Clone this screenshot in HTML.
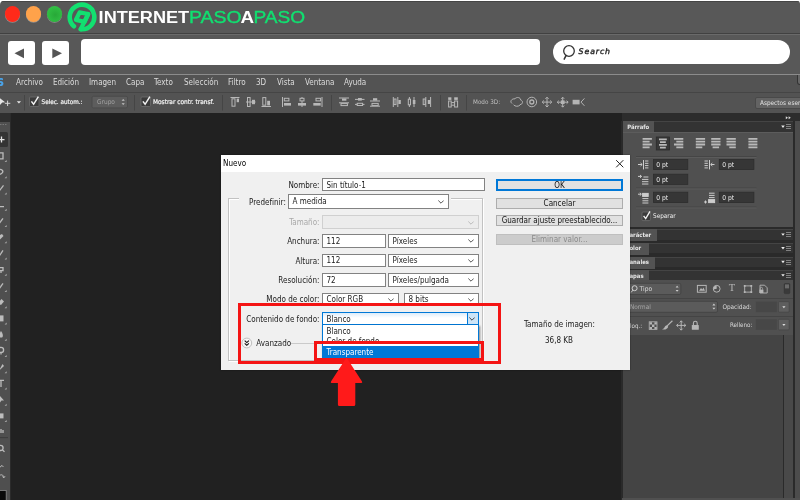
<!DOCTYPE html>
<html lang="es">
<head>
<meta charset="utf-8">
<title>Nuevo - Contenido de fondo: Transparente</title>
<style>
*{box-sizing:border-box;margin:0;padding:0}
html,body{width:800px;height:500px;overflow:hidden;background:#fff}
body{font-family:"DejaVu Sans Condensed","Liberation Sans",sans-serif;font-size:8px;color:#ddd;position:relative}
.a{position:absolute}
#win{left:0;top:1px;width:800px;height:499px;background:#585858;border-radius:4px 3px 0 0;overflow:hidden}
#o{left:0;top:-1px;width:800px;height:500px;will-change:transform}
.t{position:absolute;white-space:pre;line-height:10px;height:10px}
.dot{position:absolute;width:15.4px;height:15.4px;border-radius:50%;box-shadow:0 .7px .5px rgba(255,255,255,.35)}
.navbtn{position:absolute;top:41px;height:24px;background:#fff;border-radius:3px}
#ps{left:0;top:75px;width:800px;height:425px;background:#212121}
.menu .t{color:#dcdcdc;font-size:8px;top:3px}
#dlg{left:221px;top:155px;width:409px;height:215px;background:#f0f0f0;color:#111;box-shadow:0 0 1.5px rgba(0,0,0,.5)}
#dlg .t{color:#1a1a1a;font-size:8px}
#dlg .lbl{text-align:right}
.fld{position:absolute;background:#fff;border:1px solid #828282;height:13px}
.fld .t{left:3.5px;top:1.8px}
.btn{position:absolute;left:275px;width:127px;height:11px;background:#e1e1e1;border:1px solid #adadad;text-align:center;font-size:8px;line-height:9px;color:#111;white-space:pre}
.chev{position:absolute;right:3px;top:4px;width:6px;height:4px}
.ptab{position:absolute;left:623px;width:170px;height:11px;background:#333;border-top:1px solid #444}
.ptab .tab{position:absolute;left:0;top:-1px;height:12px;padding-top:.9px;background:#535353;color:#e6e6e6;font-weight:bold;font-size:5.9px;line-height:11px;white-space:pre;overflow:hidden}
.dk{position:absolute;background:#3a3a3a;border:1px solid #303030;height:11px}
.dk .t{color:#e8e8e8;left:3px;top:0;font-size:8px}
</style>
</head>
<body>
<div id="win" class="a"><div id="o" class="a">
  <!-- title bar -->
  <div class="a" style="left:0;top:1px;width:800px;height:1px;background:#454545"></div>
  <div class="dot" style="left:4.8px;top:6.2px;background:#ff2a1a"></div>
  <div class="dot" style="left:25.8px;top:6.3px;background:#ffa24a"></div>
  <div class="dot" style="left:46.8px;top:6.3px;background:radial-gradient(circle at 55% 55%,#28a838 0,#2fbd42 60%,#3cc94e 100%)"></div>
  <svg class="a" style="left:64px;top:1px" width="250" height="33" viewBox="64 1 250 33">
    <g fill="none" stroke="#12e070" stroke-linecap="round" stroke-linejoin="round">
      <path d="M73.93 26.28 A12.3 12.3 0 1 1 80.71 29.23" stroke-width="4.6"/>
      <path d="M88.2 14 L80.71 29.23" stroke-width="4.2"/>
      <path d="M79.6 12.4 L88.2 14 L84.6 21.8 L76 19.8 Z" stroke-width="4.3"/>
    </g>
    <text x="98.6" y="23.4" font-family="Liberation Sans, sans-serif" font-weight="bold" font-size="16" fill="#fff" textLength="90.6" lengthAdjust="spacingAndGlyphs">INTERNET</text>
    <text x="189" y="23.4" font-family="Liberation Sans, sans-serif" font-size="16" fill="#10e070" stroke="#10e070" stroke-width=".35" textLength="52.6" lengthAdjust="spacingAndGlyphs">PASO</text>
    <text x="240.6" y="23.4" font-family="Liberation Sans, sans-serif" font-weight="bold" font-size="16" fill="#fff" textLength="13.6" lengthAdjust="spacingAndGlyphs">A</text>
    <text x="253.4" y="23.4" font-family="Liberation Sans, sans-serif" font-size="16" fill="#10e070" stroke="#10e070" stroke-width=".35" textLength="51.6" lengthAdjust="spacingAndGlyphs">PASO</text>
  </svg>
  <!-- nav bar -->
  <div class="a" style="left:0;top:33px;width:800px;height:1px;background:#414141"></div>
  <div class="a" style="left:0;top:34px;width:800px;height:1px;background:#6a6a6a"></div>
  <div class="navbtn" style="left:7.6px;width:27px"></div>
  <div class="navbtn" style="left:42px;width:27px"></div>
  <svg class="a" style="left:8px;top:41px" width="62" height="24" viewBox="8 41 62 24">
    <path d="M14.5 53.3 L24 48.5 L24 58.2 Z" fill="#555"/>
    <path d="M62 53.3 L52.3 48.5 L52.3 58.2 Z" fill="#555"/>
  </svg>
  <div class="a" style="left:81px;top:39px;width:459px;height:26px;background:#fff;border-radius:4px"></div>
  <div class="a" style="left:553px;top:40px;width:237px;height:24px;background:#fff;border-radius:12px"></div>
  <svg class="a" style="left:560px;top:43px" width="20" height="20" viewBox="560 43 20 20">
    <circle cx="569" cy="51" r="5.3" fill="none" stroke="#333" stroke-width="1.3"/>
    <path d="M566 55.6 L564.2 59.2" stroke="#333" stroke-width="1.5" stroke-linecap="round"/>
  </svg>
  <div class="t" style="left:578.6px;top:47.2px;font:italic 7.8px/10px 'DejaVu Sans','Liberation Sans',sans-serif;color:#222;letter-spacing:.9px;-webkit-text-stroke:.35px #222">Search</div>
  <div class="a" style="left:0;top:74px;width:800px;height:1px;background:#8c8c8c"></div>

  <!-- photoshop -->
  <div id="ps" class="a">
    <div class="a menu" style="left:0;top:0;width:800px;height:17px;background:#535353">
      <div class="t" style="left:-3.6px;color:#4aa3e8;font-weight:bold;font-size:14px;top:1.2px">s</div>
      <div class="t" style="left:16px">Archivo</div>
      <div class="t" style="left:53px">Edición</div>
      <div class="t" style="left:89px">Imagen</div>
      <div class="t" style="left:126px">Capa</div>
      <div class="t" style="left:154px">Texto</div>
      <div class="t" style="left:184px">Selección</div>
      <div class="t" style="left:228px">Filtro</div>
      <div class="t" style="left:256px">3D</div>
      <div class="t" style="left:277px">Vista</div>
      <div class="t" style="left:305px">Ventana</div>
      <div class="t" style="left:344px">Ayuda</div>
    </div>
    <div class="a" style="left:0;top:16.5px;width:800px;height:1px;background:#454545"></div>
    <div class="a" style="left:797.2px;top:0;width:4px;height:10px;border:1.6px solid #333;border-top:none;border-radius:0 0 0 3px;background:#666"></div>
    <div id="opt" class="a" style="left:0;top:18px;width:800px;height:20px;background:#535353">
      <svg class="a" style="left:0;top:0" width="800" height="20" viewBox="0 93 800 20" fill="none" stroke="none">
        <!-- move tool -->
        <path d="M0 98.2 L5.2 102.2 L2.2 102.6 L0 105 Z" fill="#e6e6e6"/>
        <path d="M7.6 100.6 V106 M4.9 103.3 H10.3" stroke="#d8d8d8" stroke-width="1"/>
        <path d="M16.8 101.2 H21 L18.9 103.6 Z" fill="#e8e8e8"/>
        <path d="M24.5 95 V110.5 M134.5 95 V110.5 M222.5 95 V110.5 M331.5 95 V110.5 M440.5 95 V110.5 M466.5 95 V110.5" stroke="#454545" stroke-width="1"/>
        <!-- checkboxes -->
        <rect x="29.5" y="97" width="9.5" height="9.5" rx="1" fill="#3b3b3b" stroke="#6d6d6d" stroke-width=".8"/>
        <path d="M31.4 101.4 L33.6 104.3 L38.4 96.6" stroke="#f2f2f2" stroke-width="1.5"/>
        <rect x="141" y="97" width="9.5" height="9.5" rx="1" fill="#3b3b3b" stroke="#6d6d6d" stroke-width=".8"/>
        <path d="M142.9 101.4 L145.1 104.3 L149.9 96.6" stroke="#f2f2f2" stroke-width="1.5"/>
        <!-- grupo dropdown -->
        <rect x="92" y="96.3" width="35.5" height="11.6" rx="1.5" fill="#5d5d5d" stroke="#474747" stroke-width=".8"/>
        <path d="M121.6 100.8 L123.2 98.9 L124.8 100.8 Z M121.6 103.2 L123.2 105.1 L124.8 103.2 Z" fill="#c4c4c4"/>
        <!-- align icons -->
        <g stroke="#b8b8b8" stroke-width="1">
          <path d="M230.5 97.5 H239.5"/><rect x="232" y="98.8" width="3" height="7.4"/><rect x="236.7" y="98.6" width="2.3" height="3.6" fill="#b8b8b8" stroke="none"/>
          <path d="M246 102 H255.5"/><rect x="247.5" y="97.5" width="2.6" height="9"/><rect x="252" y="99.8" width="3" height="4.4" fill="#b8b8b8" stroke="none"/>
          <path d="M261.5 106.5 H271"/><rect x="262.8" y="97.6" width="3" height="7.6"/><rect x="267.2" y="100.8" width="2.8" height="4.6" fill="#b8b8b8" stroke="none"/>
          <path d="M282.5 97 V107"/><rect x="284.3" y="98.3" width="4.6" height="2.6"/><rect x="284" y="103" width="7" height="2.6" fill="#b8b8b8" stroke="none"/>
          <path d="M302 97 V107"/><rect x="300" y="98.3" width="4" height="2.6" fill="#535353"/><rect x="298" y="103" width="8" height="2.6" fill="#b8b8b8" stroke="none"/>
          <path d="M322 97 V107"/><rect x="316" y="98.3" width="4.6" height="2.6"/><rect x="313.3" y="103" width="7.4" height="2.6" fill="#b8b8b8" stroke="none"/>
          <!-- distribute -->
          <path d="M339 98 H349 M339 102.8 H349"/><rect x="342" y="98.5" width="4.4" height="2.2" fill="#b8b8b8" stroke="none"/><rect x="341" y="103.6" width="6.4" height="2"/>
          <path d="M355 99.4 H364.5 M355 104.4 H364.5"/><rect x="358" y="98" width="3.8" height="2.6" fill="#b8b8b8" stroke="none"/><rect x="357.2" y="103.3" width="5.4" height="2.2" fill="#535353"/>
          <path d="M370 101 H380 M370 106.2 H380"/><rect x="373" y="98.2" width="4.2" height="2.4" fill="#b8b8b8" stroke="none"/><rect x="372" y="103.4" width="6.2" height="2"/>
          <path d="M393.3 97 V107 M397.8 97 V107"/><rect x="394" y="99" width="2" height="5.6"/><rect x="398.4" y="100" width="2.4" height="4" fill="#b8b8b8" stroke="none"/>
          <path d="M409.4 97 V107 M414 97 V107"/><rect x="408.3" y="99.2" width="2.2" height="5.6" fill="#535353"/><rect x="412.8" y="100" width="2.6" height="4" fill="#b8b8b8" stroke="none"/>
          <path d="M425.8 97 V107 M430.6 97 V107"/><rect x="423.2" y="99" width="2" height="5.6"/><rect x="427.8" y="100" width="2.4" height="4" fill="#b8b8b8" stroke="none"/>
          <!-- auto align -->
          <rect x="448.2" y="97.3" width="3.2" height="2.6" fill="#b8b8b8" stroke="none"/><rect x="454.2" y="97.3" width="3.6" height="2.6" fill="#b8b8b8" stroke="none"/>
          <rect x="448.6" y="101" width="2.6" height="6"/><rect x="454.6" y="101" width="3" height="6"/><path d="M451.4 102.6 H454.4 M451.4 105.2 H454.4"/>
        </g>
        <!-- 3D icons -->
        <g stroke="#b4b4b4" stroke-width="1">
          <path d="M512 103.5 C509.6 101.6 511.4 98.6 515 98.8 C516.6 96.6 520.8 97.4 520.6 100 C523.4 100.6 523 104.4 520 104.6 M513.6 104.8 C515 106.6 518.4 106.8 520 105" />
          <circle cx="531.8" cy="102" r="4.8"/><circle cx="531.8" cy="102" r="2" stroke-width="1.3"/>
          <path d="M547 97.4 V106.8 M542.4 102.1 H551.6 M545.4 98.8 L547 97.2 L548.6 98.8 M545.4 105.4 L547 107 L548.6 105.4 M543.8 100.5 L542.2 102.1 L543.8 103.7 M550.2 100.5 L551.8 102.1 L550.2 103.7"/>
          <path d="M557.4 102.2 H568 M562.7 97.4 V107"/><rect x="560.8" y="100.4" width="3.8" height="3.6" fill="#b4b4b4" stroke="none"/><path d="M561.2 98.8 L562.7 97.2 L564.2 98.8 M561.2 105.6 L562.7 107.2 L564.2 105.6 M558.8 100.7 L557.2 102.2 L558.8 103.7 M566.6 100.7 L568.2 102.2 L566.6 103.7"/>
          <rect x="572.6" y="99.8" width="7" height="4.6" fill="#b4b4b4" stroke="none"/><path d="M584.4 98.4 L581 102.1 L584.4 105.8"/>
        </g>
        <!-- aspectos button -->
        <rect x="755.5" y="97.5" width="50" height="11" rx="1.5" fill="#636363" stroke="#454545" stroke-width=".8"/>
      </svg>
      <div class="t" style="left:41.6px;top:4.3px;color:#f4f4f4;-webkit-text-stroke:.2px #f4f4f4;font-size:6.3px">Selec. autom.:</div>
      <div class="t" style="left:97px;top:4.3px;color:#a2a2a2;font-size:6.5px">Grupo</div>
      <div class="t" style="left:153px;top:4.3px;color:#f4f4f4;-webkit-text-stroke:.2px #f4f4f4;font-size:6.5px">Mostrar contr. transf.</div>
      <div class="t" style="left:473px;top:4px;color:#c0c0c0;font-size:6.3px">Modo 3D:</div>
      <div class="t" style="left:760px;top:4.8px;color:#e2e2e2;font-size:6.4px">Aspectos esenciales</div>

    </div>
    <div id="tools" class="a" style="left:0;top:38px;width:10px;height:387px;background:#4f4f4f">
      <div class="a" style="left:0;top:0;width:10.4px;height:8.5px;background:#2f2f2f"></div>
      <div class="a" style="left:10px;top:0;width:1px;height:387px;background:#2b2b2b"></div>
      <div class="a" style="left:0;top:19px;width:8px;height:15px;background:#343434;border-radius:0 1.5px 1.5px 0"></div>
      <svg class="a" style="left:0;top:0" width="11" height="387" viewBox="0 113 11 387" fill="none">
      <path d="M0 124.5 H1.5 M2.5 124.5 H4 M5 124.5 H6.5" stroke="#777" stroke-width="1"/>
      <path d="M1.5 136.6 V142.6 M-2 139.6 H4.5" stroke="#e4e4e4" stroke-width="1.3"/>
      <path d="M-2 152.8 H3 V158.8 H-2" stroke="#bcbcbc" stroke-width="1.3"/>
      <path d="M6.6 160.0 V162.0 H4.6 Z" fill="#b0b0b0"/>
      <path d="M-2 169.6 C2 168.6 4 171.1 2 173.1 C0.5 174.6 -1 174.1 -1 175.6" stroke="#bcbcbc" stroke-width="1.3"/>
      <path d="M6.6 176.3 V178.3 H4.6 Z" fill="#b0b0b0"/>
      <path d="M-1 191.3 L3.5 185.3" stroke="#bcbcbc" stroke-width="1.3"/>
      <path d="M6.6 192.5 V194.5 H4.6 Z" fill="#b0b0b0"/>
      <path d="M-1 201.6 V206.6 H4" stroke="#bcbcbc" stroke-width="1.3"/>
      <path d="M6.6 208.8 V210.8 H4.6 Z" fill="#b0b0b0"/>
      <path d="M-1 223.8 L3 218.3" stroke="#bcbcbc" stroke-width="1.3"/>
      <path d="M6.6 225.0 V227.0 H4.6 Z" fill="#b0b0b0"/>
      <path d="M-2 236.1 L2 234.1 L3.5 236.1 L0 239.6 Z" fill="#bcbcbc"/>
      <path d="M6.6 241.3 V243.3 H4.6 Z" fill="#b0b0b0"/>
      <path d="M-1 256.4 L3 250.3" stroke="#bcbcbc" stroke-width="1.3"/>
      <path d="M6.6 257.6 V259.6 H4.6 Z" fill="#b0b0b0"/>
      <path d="M-1 267.6 H3 V270.6 H-1 M1 270.6 V273.1" stroke="#bcbcbc" stroke-width="1.3"/>
      <path d="M6.6 273.8 V275.8 H4.6 Z" fill="#b0b0b0"/>
      <path d="M-1 288.9 L3 283.4" stroke="#bcbcbc" stroke-width="1.3"/>
      <path d="M6.6 290.1 V292.1 H4.6 Z" fill="#b0b0b0"/>
      <path d="M-2 303.1 L1.5 299.1 L4 301.6 L1 305.1 Z" fill="#bcbcbc"/>
      <path d="M6.6 306.3 V308.3 H4.6 Z" fill="#b0b0b0"/>
      <path d="M-2 315.4 H3.5 V321.4 H-2" fill="#bcbcbc"/>
      <path d="M6.6 322.6 V324.6 H4.6 Z" fill="#b0b0b0"/>
      <path d="M1 331.1 C3.5 334.6 3.5 337.6 1 337.6 C-1.5 337.6 -1.5 334.6 1 331.1 Z" fill="#bcbcbc"/>
      <path d="M6.6 338.8 V340.8 H4.6 Z" fill="#b0b0b0"/>
      <path d="M1 349.9 m-2.6 0 a2.6 2.6 0 1 0 5.2 0 a2.6 2.6 0 1 0 -5.2 0 M1 352.4 V354.4" stroke="#bcbcbc" stroke-width="1.3"/>
      <path d="M6.6 355.1 V357.1 H4.6 Z" fill="#b0b0b0"/>
      <path d="M-1 370.6 L2.5 364.1 L4 366.1 Z" fill="#bcbcbc"/>
      <path d="M6.6 371.3 V373.3 H4.6 Z" fill="#b0b0b0"/>
      <path d="M-2 380.4 H4 M1 380.4 V386.9" stroke="#bcbcbc" stroke-width="1.3"/>
      <path d="M6.6 387.6 V389.6 H4.6 Z" fill="#b0b0b0"/>
      <path d="M0 396.1 V402.6 L1.5 400.6 L4 400.6 Z" fill="#bcbcbc"/>
      <path d="M6.6 403.8 V405.8 H4.6 Z" fill="#b0b0b0"/>
      <path d="M-2 413.4 H3.5 V418.4 H-2" fill="#bcbcbc"/>
      <path d="M6.6 420.1 V422.1 H4.6 Z" fill="#b0b0b0"/>
      <path d="M-1 435.6 V430.1 M1 433.1 V429.1 M3 433.1 V430.1" stroke="#bcbcbc" stroke-width="1.3"/>
      <path d="M0.5 447.9 m-2.6 0 a2.6 2.6 0 1 0 5.2 0 a2.6 2.6 0 1 0 -5.2 0 M2.6 450.0 L4.5 451.9" stroke="#bcbcbc" stroke-width="1.3"/>
      <path d="M-1 468 L2 465.4 L3.4 467" stroke="#bbb" stroke-width="1"/><path d="M-1 476 C1 474 3.4 474.6 3.8 477.4 M2.4 476.6 L3.9 477.8 L5 476.2" stroke="#bbb" stroke-width="1"/><path d="M0 437.6 H8" stroke="#3d3d3d" stroke-width="1"/>
      <rect x="-1" y="490.4" width="7.2" height="12" fill="#0a0a0a" stroke="#8a8a8a" stroke-width=".8"/>
      </svg>

    </div>
    <div id="panels" class="a" style="left:0;top:-75px;width:800px;height:500px">
      <div class="a" style="left:621.5px;top:113px;width:179px;height:8px;background:#2c2c2c"></div>
      <div class="a" style="left:621px;top:121px;width:179px;height:379px;background:#2a2a2a"></div>
      <div class="a" style="left:794.5px;top:121px;width:6px;height:379px;background:#4c4c4c"></div>
      <!-- Párrafo -->
      <div class="ptab" style="top:121px;height:11px"><div class="tab" style="width:31px;padding-left:4.2px">Párrafo</div></div>
      <div class="a" style="left:623px;top:132px;width:170px;height:95px;background:#505050;border-top:1px solid #5c5c5c"></div>
      <div class="ptab" style="top:229px"><div class="tab" style="width:33.5px;padding-left:2.6px">Carácter</div></div>
      <div class="ptab" style="top:242.5px;height:10.5px"><div class="tab" style="width:25.5px;padding-left:2.6px">Color</div></div>
      <div class="ptab" style="top:256.5px;height:10.5px"><div class="tab" style="width:32px;padding-left:2.6px">Canales</div></div>
      <div class="ptab" style="top:270px;height:10px"><div class="tab" style="width:26px;padding-left:2.6px">Capas</div></div>
      <div class="a" style="left:623px;top:280px;width:170px;height:54.5px;background:#505050"></div>
      <div class="a" style="left:623px;top:298px;width:170px;height:1px;background:#444"></div>
      <div class="a" style="left:623px;top:315.5px;width:170px;height:1px;background:#444"></div>
      <div class="a" style="left:623px;top:334.5px;width:160px;height:163px;background:#444"></div>
      <div class="a" style="left:783.5px;top:334.5px;width:9.5px;height:163px;background:#494949"></div>
      <div class="a" style="left:621.5px;top:498px;width:179px;height:2px;background:#505050"></div>
      <svg class="a" style="left:620px;top:113px" width="180" height="230" viewBox="620 113 180 230" fill="none">
        <path d="M785.8 116.2 L788 117.7 L785.8 119.2 Z M788.6 116.2 L790.8 117.7 L788.6 119.2 Z" fill="#d9d9d9"/>
        <!-- panel menu icons -->
        <g fill="#cfcfcf">
          <path fill="#ececec" d="M781.2 125.6 H784.8 L783 128 Z M781.2 233.4 H784.8 L783 235.8 Z M781.2 247 H784.8 L783 249.4 Z M781.2 260.8 H784.8 L783 263.2 Z M781.2 274.2 H784.8 L783 276.6 Z"/>
          <path d="M786 124 h5 v1 h-5z m0 2 h5 v1 h-5z m0 2 h5 v1 h-5z M786 232 h5 v1 h-5z m0 2 h5 v1 h-5z m0 2 h5 v1 h-5z M786 246 h5 v1 h-5z m0 2 h5 v1 h-5z m0 2 h5 v1 h-5z M786 260 h5 v1 h-5z m0 2 h5 v1 h-5z m0 2 h5 v1 h-5z M786 273 h5 v1 h-5z m0 2 h5 v1 h-5z m0 2 h5 v1 h-5z" opacity=".5"/>
        </g>
        <!-- paragraph align icons -->
        <rect x="656.3" y="137" width="13.2" height="13" fill="#383838" stroke="#2c2c2c" stroke-width=".8"/>
        <g fill="#b9b9b9">
          <path d="M642.6 138 h9.3 v1.8 h-9.3z m0 2.8 h7 v1.8 h-7z m0 2.8 h9.3 v1.8 h-9.3z m0 2.8 h7 v1.8 h-7z"/>
          <path d="M659 138.6 h7.8 v1.7 h-7.8z m1 2.7 h5.8 v1.7 h-5.8z m-1 2.7 h7.8 v1.7 h-7.8z m1 2.7 h5.8 v1.7 h-5.8z"/>
          <path d="M674 138 h9.3 v1.8 h-9.3z m2.3 2.8 h7 v1.8 h-7z m-2.3 2.8 h9.3 v1.8 h-9.3z m2.3 2.8 h7 v1.8 h-7z"/>
          <path d="M695.8 138 h9.3 v1.8 h-9.3z m0 2.8 h9.3 v1.8 h-9.3z m0 2.8 h9.3 v1.8 h-9.3z m0 2.8 h6.5 v1.8 h-6.5z"/>
          <path d="M711.2 138 h9.3 v1.8 h-9.3z m0 2.8 h9.3 v1.8 h-9.3z m0 2.8 h9.3 v1.8 h-9.3z m1.4 2.8 h6.5 v1.8 h-6.5z"/>
          <path d="M726.5 138 h9.3 v1.8 h-9.3z m0 2.8 h9.3 v1.8 h-9.3z m0 2.8 h9.3 v1.8 h-9.3z m2.8 2.8 h6.5 v1.8 h-6.5z"/>
          <path d="M748.4 138 h9 v1.8 h-9z m0 2.8 h9 v1.8 h-9z m0 2.8 h9 v1.8 h-9z m0 2.8 h9 v1.8 h-9z"/>
        </g>
        <path d="M636 156.5 H756.5 M636 188 H756.5 M636 207 H756.5" stroke="#454545" stroke-width="1"/>
        <path d="M636 157.5 H756.5 M636 189 H756.5 M636 208 H756.5" stroke="#5b5b5b" stroke-width="1"/>
        <!-- input boxes -->
        <g fill="#363636" stroke="#2d2d2d" stroke-width=".8">
          <rect x="653.4" y="159.4" width="34.4" height="10.2"/><rect x="719.3" y="159.4" width="34.6" height="10.2"/>
          <rect x="653.4" y="174.2" width="34.4" height="10.2"/>
          <rect x="653.4" y="192.2" width="34.4" height="10.4"/><rect x="719.3" y="192.2" width="34.6" height="10.4"/>
        </g>
        <!-- indent icons -->
        <g stroke="#cdcdcd" stroke-width="1">
          <path d="M638 164.5 H642 M640.6 163 L642.2 164.5 L640.6 166 M643.5 160 V169.4 M645 161 H648.4 M645 163.3 H648.4 M645 165.6 H648.4 M645 167.9 H648.4"/>
          <path d="M704.5 161 H707.9 M704.5 163.3 H707.9 M704.5 165.6 H707.9 M704.5 167.9 H707.9 M709.5 160 V169.4 M714.5 164.5 H710.9 M712.3 163 L710.7 164.5 L712.3 166"/>
          <path d="M638 176.4 H641.4 M640 175 L641.6 176.4 L640 177.8 M643.4 177 H648.4 M642 179.4 H648.4 M642 181.7 H648.4 M642 184 H648.4"/>
          <path d="M638 194.2 H641 M639.8 192.8 L641.4 194.2 L639.8 195.6"/><rect x="642.6" y="193.4" width="5.6" height="3" fill="#cdcdcd"/><path d="M642.4 198.6 H648.4 M642.4 200.8 H648.4 M642.4 203 H648.4"/>
          <path d="M704 202 H707 M705.5 200.5 V203.5"/><path d="M709 193.2 H714.6 M709 195.4 H714.6 M709 197.6 H714.6"/><rect x="708.6" y="199.6" width="6" height="3" fill="#cdcdcd"/>
        </g>
        <!-- separar checkbox -->
        <rect x="642" y="212" width="8.4" height="8.6" rx="1" fill="#3b3b3b" stroke="#6d6d6d" stroke-width=".8"/>
        <path d="M643.6 215.8 L645.7 218.6 L650 211.4" stroke="#f2f2f2" stroke-width="1.4"/>
        <!-- capas row1 -->
        <rect x="623.5" y="283.3" width="57.3" height="11.2" rx="1.5" fill="#5b5b5b" stroke="#414141" stroke-width=".8"/>
        <circle cx="634.6" cy="288.2" r="2.5" stroke="#d0d0d0" stroke-width="1"/><path d="M632.8 290.2 L631.2 292.4" stroke="#d0d0d0" stroke-width="1"/>
        <path d="M675.6 287.6 L677.1 285.8 L678.6 287.6 Z M675.6 290 L677.1 291.8 L678.6 290 Z" fill="#cfcfcf"/>
        <rect x="697.4" y="285.4" width="8.8" height="6.8" stroke="#b6b6b6" stroke-width="1"/><path d="M699 290.8 L701 288 L702.4 289.6 L703.4 287.4 L705 290.8 Z" fill="#b6b6b6"/>
        <circle cx="716.7" cy="288.8" r="3.4" stroke="#b6b6b6" stroke-width="1"/><path d="M716.7 288.8 L716.7 285.4 A3.4 3.4 0 0 0 713.4 289.6 Z" fill="#b6b6b6"/>
        <rect x="743.8" y="285" width="1.8" height="1.8" fill="#b6b6b6"/><rect x="750.4" y="285" width="1.8" height="1.8" fill="#b6b6b6"/><rect x="743.8" y="291.2" width="1.8" height="1.8" fill="#b6b6b6"/><rect x="750.4" y="291.2" width="1.8" height="1.8" fill="#b6b6b6"/><rect x="744.7" y="285.9" width="6.6" height="6.2" stroke="#b6b6b6" stroke-width=".9"/>
        <path d="M760 285.2 H764.6 L767.2 287.8 V293 H760 Z" stroke="#b6b6b6" stroke-width=".9"/><rect x="759.4" y="289.6" width="4" height="3.4" fill="#b6b6b6"/><path d="M760.3 289.6 V288.4 A1.1 1.1 0 0 1 762.5 288.4 V289.6" stroke="#b6b6b6" stroke-width=".7"/>
        <rect x="784.2" y="283.6" width="5.6" height="10" rx="1" fill="#3a3a3a" stroke="#333" stroke-width=".6"/><rect x="785" y="284.4" width="4" height="4" fill="#6a6a6a"/>
        <!-- row2 -->
        <rect x="623.5" y="301.3" width="94" height="11" rx="1.5" fill="#5b5b5b" stroke="#414141" stroke-width=".8"/>
        <path d="M712.4 305.4 L713.9 303.6 L715.4 305.4 Z M712.4 307.8 L713.9 309.6 L715.4 307.8 Z" fill="#cfcfcf"/>
        <rect x="755.8" y="301.6" width="21" height="10.6" fill="#474747"/><rect x="778.4" y="301.6" width="10.8" height="10.6" rx="1" fill="#5e5e5e" stroke="#444" stroke-width=".7"/><path d="M782.3 306.2 H785.5 L783.9 308.2 Z" fill="#ddd"/>
        <rect x="755.8" y="319.3" width="21" height="10.6" fill="#474747"/><rect x="778.4" y="319.3" width="10.8" height="10.6" rx="1" fill="#5e5e5e" stroke="#444" stroke-width=".7"/><path d="M782.3 324 H785.5 L783.9 326 Z" fill="#ddd"/>
        <!-- row3 lock icons -->
        <g fill="#b6b6b6"><rect x="649.2" y="321.8" width="7.8" height="7.6" fill="none" stroke="#b6b6b6" stroke-width=".8"/><path d="M649.6 322.2 h2.4 v2.4 h-2.4z m4.8 0 h2.4 v2.4 h-2.4z m-2.4 2.4 h2.4 v2.4 h-2.4z m-2.4 2.4 h2.4 v2 h-2.4z m4.8 0 h2.4 v2 h-2.4z"/></g>
        <path d="M672.4 320.8 L666.6 326.4" stroke="#b6b6b6" stroke-width="1.2"/><path d="M667.2 325.6 C665.6 325 664.8 326.6 664.4 327.6 C663.8 328.8 662.8 329.2 662 329.2 C664.4 330.2 667.4 329.4 668.2 326.8 Z" fill="#b6b6b6"/>
        <path d="M681.2 320.9 V330 M676.7 325.4 H685.8 M679.7 322.4 L681.2 320.8 L682.7 322.4 M679.7 328.6 L681.2 330.2 L682.7 328.6 M678.2 323.9 L676.6 325.4 L678.2 326.9 M684.2 323.9 L685.8 325.4 L684.2 326.9" stroke="#b6b6b6" stroke-width="1"/>
        <rect x="691.8" y="325" width="7" height="4.8" rx=".6" fill="#b6b6b6"/><path d="M693.4 325 V323.2 A1.9 1.9 0 0 1 697.2 323.2 V325" stroke="#b6b6b6" stroke-width="1.1"/>
      </svg>
      <div class="t" style="left:656.3px;top:160px;color:#ededed;font-size:6.7px">0 pt</div>
      <div class="t" style="left:722.3px;top:160px;color:#ededed;font-size:6.7px">0 pt</div>
      <div class="t" style="left:656.3px;top:174.6px;color:#ededed;font-size:6.7px">0 pt</div>
      <div class="t" style="left:656.3px;top:192.8px;color:#ededed;font-size:6.7px">0 pt</div>
      <div class="t" style="left:722.3px;top:192.8px;color:#ededed;font-size:6.7px">0 pt</div>
      <div class="t" style="left:653px;top:211.3px;color:#ededed;font-size:6.4px">Separar</div>
      <div class="t" style="left:639.6px;top:284px;color:#d8d8d8;font-size:6.6px">Tipo</div>
      <div class="t" style="left:630px;top:302px;color:#a8a8a8;font-size:6.4px">Normal</div>
      <div class="t" style="left:722.4px;top:302px;color:#d8d8d8;font-size:6.4px">Opacidad:</div>
      <div class="t" style="left:626.2px;top:321px;color:#d8d8d8;font-size:6.2px">Bloq.:</div>
      <div class="t" style="left:730px;top:319.8px;color:#d8d8d8;font-size:6.2px">Relleno:</div>
      <div class="t" style="left:728.8px;top:282.4px;color:#b6b6b6;font-family:'Liberation Serif',serif;font-size:10.5px;line-height:12px;height:12px">T</div>

    </div>
  </div>

  <!-- dialog -->
  <div id="dlg" class="a">
    <div class="a" style="left:0;top:0;width:409px;height:17px;background:#fff"></div>
    <div class="t" style="left:2px;top:3.5px;color:#000">Nuevo</div>
    <svg class="a" style="left:594px;top:4px;left:394px" width="10" height="10" viewBox="0 0 10 10"><path d="M1.2 1.2 L8.3 8.3 M8.3 1.2 L1.2 8.3" stroke="#222" stroke-width="1" fill="none"/></svg>
    <!-- fieldset -->
    <div class="a" style="left:6.8px;top:43.4px;width:255.2px;height:163px;border:1px solid #c2c2c2;box-shadow:1px 1px 0 #fff, inset 1px 1px 0 #fff"></div>
    <div class="a" style="left:18px;top:40px;width:212px;height:10px;background:#f0f0f0"></div>
    <!-- labels -->
    <div class="t lbl" style="right:310.5px;top:25.5px">Nombre:</div>
    <div class="t lbl" style="right:344.2px;top:42.8px">Predefinir:</div>
    <div class="t lbl" style="right:310.5px;top:62.5px;color:#a8a8a8">Tamaño:</div>
    <div class="t lbl" style="right:310.5px;top:82.0px">Anchura:</div>
    <div class="t lbl" style="right:310.5px;top:101.5px">Altura:</div>
    <div class="t lbl" style="right:310.5px;top:120.6px">Resolución:</div>
    <div class="t lbl" style="right:310.5px;top:140.0px">Modo de color:</div>
    <div class="t lbl" style="right:310.5px;top:159.5px">Contenido de fondo:</div>
    <!-- fields -->
    <div class="fld" style="left:101px;top:23px;width:163px"><div class="t">Sin título-1</div></div>
    <div class="fld" style="left:67px;top:39px;width:161px;height:14.5px"><div class="t" style="top:2.4px">A medida</div><svg class="chev" style="top:5px;right:4px" viewBox="0 0 6 4"><path d="M.3 .5 L3 3.2 L5.7 .5" fill="none" stroke="#444" stroke-width=".9"/></svg></div>
    <div class="fld" style="left:101px;top:59.5px;width:157px;height:14px;background:#ececec;border-color:#d0d0d0"><svg class="chev" style="top:5px;right:4px" viewBox="0 0 6 4"><path d="M.3 .5 L3 3.2 L5.7 .5" fill="none" stroke="#b5b5b5" stroke-width=".9"/></svg></div>
    <div class="fld" style="left:101px;top:79px;width:63.5px;height:13.5px"><div class="t">112</div></div>
    <div class="fld" style="left:167px;top:79px;width:91px;height:13.5px"><div class="t">Píxeles</div><svg class="chev" style="right:4px" viewBox="0 0 6 4"><path d="M.3 .5 L3 3.2 L5.7 .5" fill="none" stroke="#444" stroke-width=".9"/></svg></div>
    <div class="fld" style="left:101px;top:98.5px;width:63.5px;height:13.5px"><div class="t">112</div></div>
    <div class="fld" style="left:167px;top:98.5px;width:91px;height:13.5px"><div class="t">Píxeles</div><svg class="chev" style="right:4px" viewBox="0 0 6 4"><path d="M.3 .5 L3 3.2 L5.7 .5" fill="none" stroke="#444" stroke-width=".9"/></svg></div>
    <div class="fld" style="left:101px;top:118px;width:63.5px;height:13.5px"><div class="t">72</div></div>
    <div class="fld" style="left:167px;top:118px;width:91px;height:13.5px"><div class="t">Píxeles/pulgada</div><svg class="chev" style="right:4px" viewBox="0 0 6 4"><path d="M.3 .5 L3 3.2 L5.7 .5" fill="none" stroke="#444" stroke-width=".9"/></svg></div>
    <div class="fld" style="left:101px;top:137.5px;width:77px;height:13.5px"><div class="t">Color RGB</div><svg class="chev" style="right:4px" viewBox="0 0 6 4"><path d="M.3 .5 L3 3.2 L5.7 .5" fill="none" stroke="#444" stroke-width=".9"/></svg></div>
    <div class="fld" style="left:183px;top:137.5px;width:75px;height:13.5px"><div class="t">8 bits</div><svg class="chev" style="right:4px" viewBox="0 0 6 4"><path d="M.3 .5 L3 3.2 L5.7 .5" fill="none" stroke="#444" stroke-width=".9"/></svg></div>
    <div class="fld" style="left:101px;top:157px;width:157px;height:13px;border-color:#0078d7;background:linear-gradient(#dcecfa,#fff 45%)"><div class="t">Blanco</div><div class="a" style="right:0;top:0;width:11px;height:11px;background:#cce4f7;border-left:1px solid #0078d7"></div><svg class="chev" style="right:3px;top:3.5px" viewBox="0 0 6 4"><path d="M.3 .5 L3 3.2 L5.7 .5" fill="none" stroke="#333" stroke-width=".9"/></svg></div>
    <!-- dropdown list -->
    <div class="a" style="left:101px;top:169.5px;width:156.8px;height:33px;background:#fff;border:1px solid #0078d7;border-top:none;box-shadow:1px 1px 2px rgba(0,0,0,.45)">
      <div class="t" style="left:3.5px;top:2.2px">Blanco</div>
      <div class="t" style="left:3.5px;top:12.7px">Color de fondo</div>
      <div class="a" style="left:0;top:21.2px;width:154.8px;height:11.3px;background:#0078d7"></div>
      <div class="t" style="left:3.5px;top:23.4px;color:#fff">Transparente</div>
    </div>
    <!-- avanzado -->
    <svg class="a" style="left:20px;top:182px" width="12" height="12" viewBox="0 0 12 12"><circle cx="5.8" cy="6" r="4.9" fill="#f6f6f6" stroke="#b9b9b9" stroke-width=".9"/><path d="M3.7 3.6 L5.8 5.6 L7.9 3.6 M3.7 6.3 L5.8 8.3 L7.9 6.3" fill="none" stroke="#111" stroke-width="1.1"/></svg>
    <div class="t" style="left:35.3px;top:184px">Avanzado</div>
    <div class="a" style="left:70px;top:187.6px;width:23px;height:1px;background:#cacaca"></div>
    <!-- buttons -->
    <div class="btn" style="top:24px;height:11.5px;border:2px solid #0078d7;line-height:9px">OK</div>
    <div class="btn" style="top:42.5px">Cancelar</div>
    <div class="btn" style="top:60.3px">Guardar ajuste preestablecido...</div>
    <div class="btn" style="top:78.7px;background:#cccccc;border-color:#bfbfbf;color:#8a8a8a">Eliminar valor...</div>
    <div class="t" style="left:303px;top:165.3px">Tamaño de imagen:</div>
    <div class="t" style="left:324px;top:180.7px">36,8 KB</div>

  </div>
  <div class="a" style="left:237.6px;top:302.6px;width:263.6px;height:61.8px;border:3.6px solid #f41414"></div>
  <div class="a" style="left:314.3px;top:340.5px;width:169.5px;height:20.8px;border:3.6px solid #f41414"></div>
  <svg class="a" style="left:325px;top:355px" width="45" height="55" viewBox="325 355 45 55"><path d="M346.5 357.6 L362 381.5 Q362.8 383 361.2 383 L355.3 383 L355.3 404.5 Q355.3 406 353.8 406 L339.4 406 Q337.9 406 337.9 404.5 L337.9 383 L331.8 383 Q330.2 383 331 381.5 Z" fill="#ff1a1a"/></svg>

</div></div>
</body>
</html>
